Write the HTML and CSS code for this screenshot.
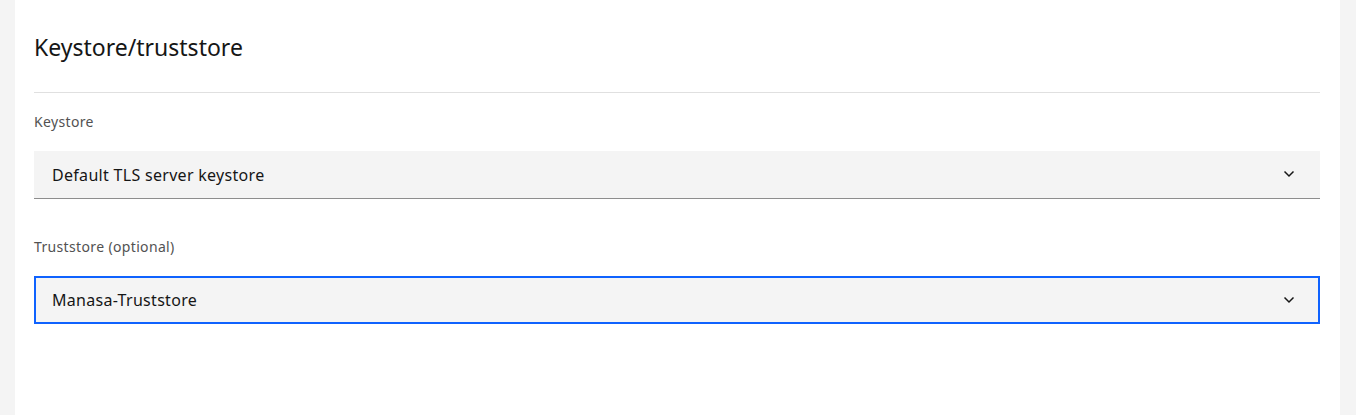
FILE: index.html
```html
<!DOCTYPE html>
<html>
<head>
<meta charset="utf-8">
<link rel="stylesheet" href="styles.css">
</head>
<body>
<div class="page">
  <section class="panel">
    <h2 class="title">Keystore/truststore</h2>
    <div class="divider"></div>
    <div class="field">
      <label class="label">Keystore</label>
      <div class="select">
        <span class="value">Default TLS server keystore</span>
        <svg class="chev" width="12" height="8" viewBox="0 0 12 8"><polyline points="1.5,1.5 6,6 10.5,1.5" fill="none" stroke="#161616" stroke-width="1.5"/></svg>
      </div>
    </div>
    <div class="field second">
      <label class="label">Truststore (optional)</label>
      <div class="select focus">
        <span class="value">Manasa-Truststore</span>
        <svg class="chev" width="12" height="8" viewBox="0 0 12 8"><polyline points="1.5,1.5 6,6 10.5,1.5" fill="none" stroke="#161616" stroke-width="1.5"/></svg>
      </div>
    </div>
  </section>
</div>
</body>
</html>
```
FILE: styles.css
```css
* { box-sizing: border-box; }
html, body { margin: 0; height: 100%; }
body {
  background: #f4f4f4;
  font-family: "Noto Sans", "Open Sans", sans-serif;
  color: #161616;
}
.page {
  height: 415px;
  padding: 0 16px 0 15px;
  display: flex;
}
.panel {
  flex: 1;
  background: #ffffff;
  padding: 0 20px 0 19px;
}
.title {
  margin: 0;
  padding-top: 33px;
  height: 92px;
  font-size: 23px;
  font-weight: 400;
  line-height: 28px;
  letter-spacing: 0;
}
.divider {
  height: 1px;
  background: #e0e0e0;
}
.field { padding-top: 20px; }
.field.second { padding-top: 39px; }
.label {
  display: block;
  font-size: 14px;
  line-height: 18px;
  color: #525252;
  letter-spacing: 0.35px;
  margin-bottom: 20px;
}
.select {
  height: 48px;
  background: #f4f4f4;
  border-bottom: 1px solid #8d8d8d;
  display: flex;
  align-items: center;
  justify-content: space-between;
  padding: 0 25px 0 18px;
}
.select.focus {
  border: 2px solid #0f62fe;
  padding: 0 23px 0 16px;
}
.value { font-size: 16px; letter-spacing: 0.3px; }
.chev { flex: none; margin-top: -1px; }
```
